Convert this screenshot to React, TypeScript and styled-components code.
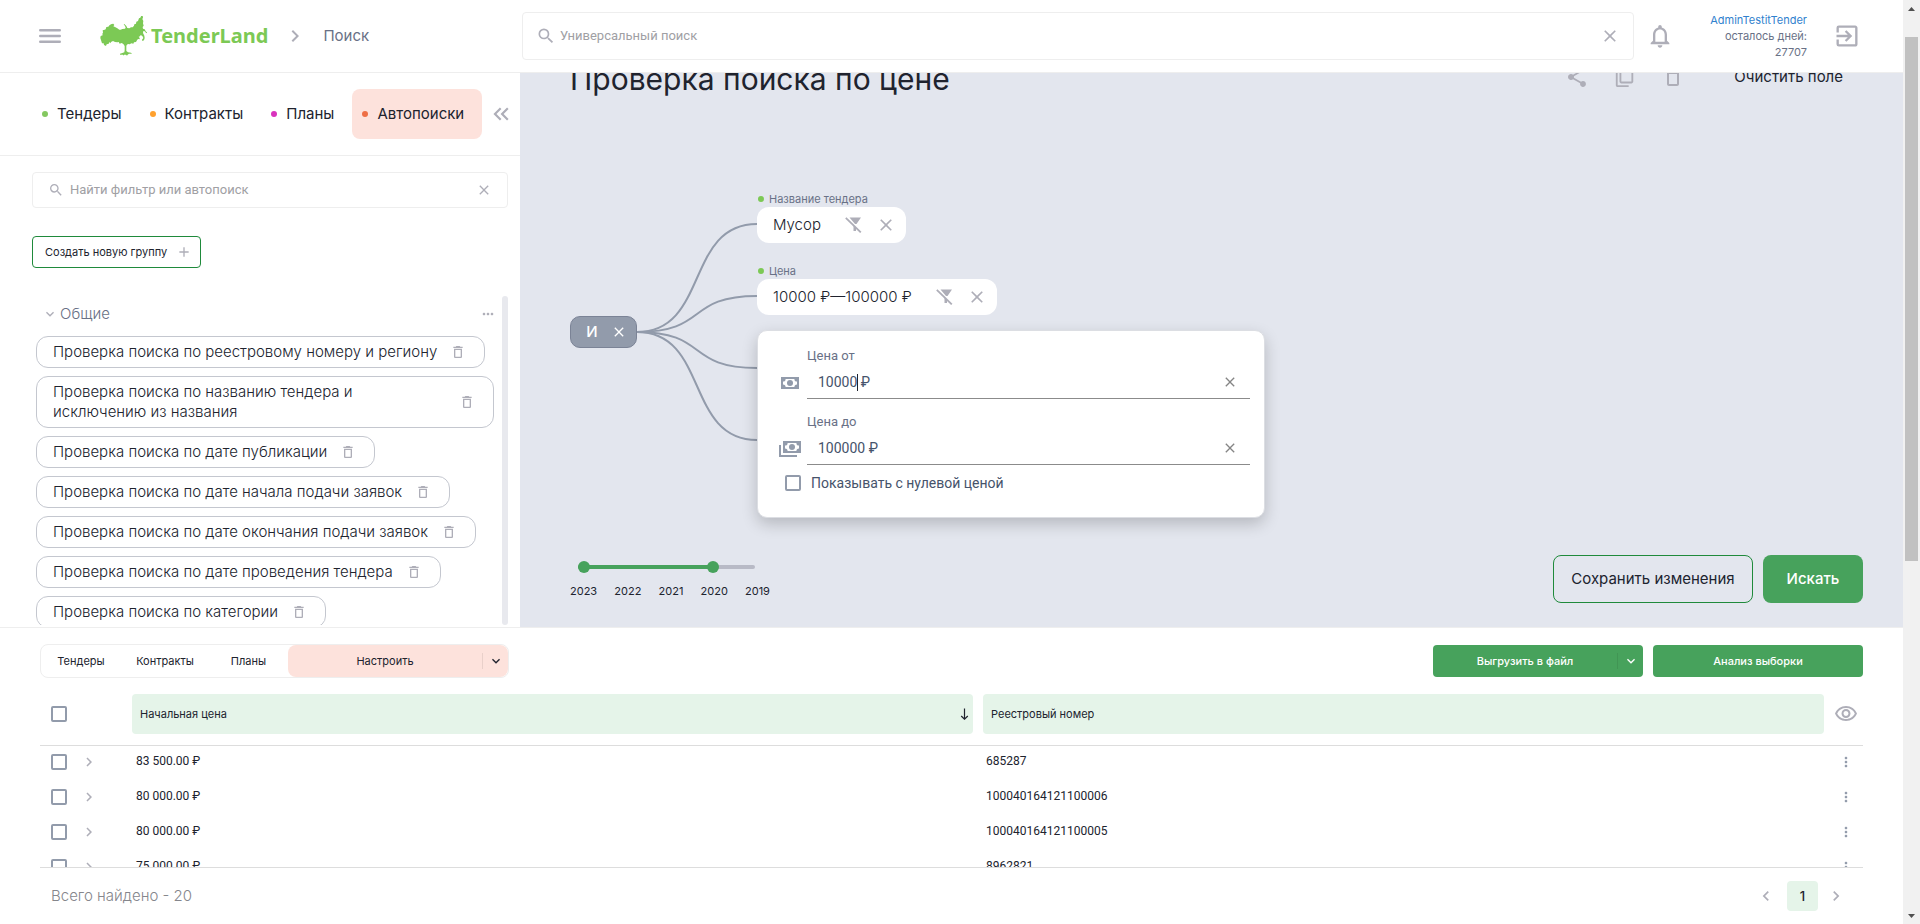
import React from "react";
import styled, { createGlobalStyle } from "styled-components";
import {
  MdAdd,
  MdChevronLeft,
  MdChevronRight,
  MdClose,
  MdDeleteOutline,
  MdExitToApp,
  MdExpandMore,
  MdKeyboardDoubleArrowLeft,
  MdMoreHoriz,
  MdMoreVert,
  MdNotificationsNone,
  MdOutlineVisibility,
  MdSearch,
  MdShare,
} from "react-icons/md";

const color = {
  ink: "#20232e",
  muted: "#697186",
  slate: "#46536b",
  icon: "#aeaeb8",
  steel: "#929bab",
  line: "#eeeeee",
  rule: "#dddddd",
  canvas: "#e3e6ee",
  green: "#47a25c",
  outline: "#1f8a3b",
  mint: "#e5f4e9",
  peach: "#fde2dc",
  brand: "#7cc955",
  link: "#3182ce",
};

const GlobalStyle = createGlobalStyle`
  *, *::before, *::after { box-sizing: border-box; }
  body {
    margin: 0;
    background: #fff;
    color: ${color.ink};
    font: 400 15px/20px Inter, "Liberation Sans", sans-serif;
  }
  button, input { font: inherit; color: inherit; margin: 0; }
  button { border: 0; padding: 0; background: none; cursor: pointer; }
  svg { display: block; flex: none; }
  h1, p { margin: 0; }
`;

/* ---------- page frame ---------- */

const Shell = styled.div`
  display: grid;
  grid-template-columns: minmax(0, 1fr) 17px;
  height: 100vh;
`;

const Page = styled.div`
  display: flex;
  flex-direction: column;
  min-width: 0;
  min-height: 0;
`;

const ScrollRail = styled.div`
  display: flex;
  flex-direction: column;
  align-items: center;
  background: #f1f1f1;
`;

const RailArrow = styled.svg`
  width: 17px;
  height: 17px;
  fill: #505050;
`;

const RailSpace = styled.div<{ $grow: number }>`
  flex: ${(p) => p.$grow} 1 0;
`;

const RailThumb = styled.div`
  flex: 524 1 0;
  width: 13px;
  background: #c1c1c1;
`;

const IconButton = styled.button<{ $tone?: string }>`
  display: flex;
  align-items: center;
  justify-content: center;
  flex: none;
  color: ${(p) => p.$tone ?? color.icon};
`;

/* ---------- header ---------- */

const Header = styled.header`
  position: relative;
  z-index: 2;
  flex: none;
  display: flex;
  align-items: center;
  height: 73px;
  padding-right: 42px;
  border-bottom: 1px solid ${color.line};
  background: #fff;
`;

const HeaderLeft = styled.div`
  flex: none;
  display: flex;
  align-items: center;
  width: 522px;
  padding-left: 39px;
`;

const Logo = styled.a`
  display: flex;
  align-items: center;
  gap: 4px;
  margin: 0 15px 0 39px;
  color: ${color.brand};
  font: 700 20px/28px "Noto Sans", sans-serif;
  text-decoration: none;
`;

const Crumb = styled.span`
  margin-left: 16px;
  color: ${color.muted};
`;

const SearchField = styled.label<{ $large?: boolean }>`
  display: flex;
  align-items: center;
  gap: ${(p) => (p.$large ? "4px" : "6px")};
  flex: ${(p) => (p.$large ? "1 1 0" : "none")};
  height: ${(p) => (p.$large ? "48px" : "36px")};
  padding: 0 ${(p) => (p.$large ? "13px" : "15px")} 0 ${(p) => (p.$large ? "13px" : "15px")};
  border: 1px solid ${color.line};
  border-radius: 4px;
  background: #fff;
  color: ${color.icon};
`;

const SearchInput = styled.input`
  flex: 1;
  min-width: 0;
  border: 0;
  outline: 0;
  padding: 0;
  background: none;
  font: 400 13px/16px Roboto, sans-serif;
  color: ${color.ink};
  &::placeholder { color: #a0a0a4; opacity: 1; }
`;

const BellButton = styled(IconButton)`
  margin-left: 12px;
`;

const Account = styled.div`
  width: 120px;
  margin: 0 26px 0 13px;
  color: ${color.muted};
  font-size: 11px;
  line-height: 16px;
  text-align: right;
  a { color: ${color.link}; text-decoration: none; }
`;

/* ---------- workspace ---------- */

const Workspace = styled.div`
  flex: 1 1 0;
  min-height: 0;
  display: grid;
  grid-template-columns: 520px minmax(0, 1fr);
  border-bottom: 1px solid ${color.line};
`;

const Sidebar = styled.aside`
  display: flex;
  flex-direction: column;
  min-height: 0;
  overflow: hidden;
`;

const TabRow = styled.nav`
  flex: none;
  display: flex;
  align-items: center;
  height: 83px;
  padding: 0 6px 0 32px;
  border-bottom: 1px solid ${color.line};
`;

const Tab = styled.button<{ $dot: string; $active?: boolean }>`
  display: flex;
  align-items: center;
  gap: 9px;
  height: 50px;
  padding: 0 18px 0 10px;
  border-radius: 8px;
  background: ${(p) => (p.$active ? color.peach : "none")};
  &::before {
    content: "";
    width: 6px;
    height: 6px;
    border-radius: 50%;
    background: ${(p) => p.$dot};
  }
`;

const CollapseButton = styled(IconButton)`
  margin-left: auto;
`;

const SidebarTools = styled.div`
  flex: none;
  display: flex;
  flex-direction: column;
  align-items: stretch;
  gap: 28px;
  padding: 16px 12px 28px 32px;
`;

const CreateGroup = styled.button`
  display: flex;
  align-items: center;
  align-self: flex-start;
  gap: 9px;
  height: 32px;
  padding: 0 8px 0 12px;
  border: 1px solid ${color.outline};
  border-radius: 4px;
  font-size: 11px;
  svg { color: ${color.icon}; }
`;

const GroupScroller = styled.div`
  flex: 1 1 0;
  min-height: 0;
  display: grid;
  grid-template-columns: minmax(0, 1fr) 6px;
  column-gap: 6px;
  margin: 0 12px 2px 36px;
  overflow: hidden;
`;

const GroupThumb = styled.div`
  border-radius: 3px;
  background: #e8e9ee;
`;

const GroupBody = styled.div`
  min-height: 0;
  overflow: hidden;
`;

const GroupHead = styled.div`
  display: flex;
  align-items: center;
  height: 36px;
  padding-left: 6px;
  color: ${color.muted};
  font-weight: 300;
  span { flex: 1; margin-left: 2px; }
`;

const ChipList = styled.ul`
  display: flex;
  flex-direction: column;
  align-items: flex-start;
  gap: 8px;
  margin: 4px 2px 0 0;
  padding: 0;
  list-style: none;
`;

const SavedChip = styled.li`
  flex: none;
  display: flex;
  align-items: center;
  gap: 13px;
  max-width: 100%;
  padding: 5px 18px 5px 16px;
  border: 1px solid #c4c7cf;
  border-radius: 12px;
  font-weight: 300;
`;

/* ---------- canvas ---------- */

const Canvas = styled.main`
  min-width: 0;
  min-height: 0;
  overflow: hidden;
  background: ${color.canvas};
`;

const CanvasBody = styled.div`
  display: flex;
  flex-direction: column;
  height: calc(100% + 24px);
  margin-top: -24px;
  padding-bottom: 24px;
`;

const TitleRow = styled.div`
  flex: none;
  display: flex;
  align-items: center;
  height: 56px;
  padding: 0 60px 0 50px;
`;

const Title = styled.h1`
  flex: 1;
  padding-top: 4px;
  font-size: 30px;
  font-weight: 400;
  line-height: 36px;
`;

const TitleTools = styled.div`
  display: flex;
  align-items: center;
  gap: 25px;
  margin-right: 49px;
`;

/* free canvas: the nodes stand at their own coordinates */
const Diagram = styled.div`
  position: relative;
  flex: 1;
`;

const Wires = styled.svg`
  position: absolute;
  left: 117px;
  top: 118px;
  fill: none;
  stroke: ${color.steel};
  stroke-width: 2;
`;

const RootNode = styled.button`
  position: absolute;
  left: 50px;
  top: 211px;
  display: flex;
  align-items: center;
  justify-content: center;
  gap: 13px;
  width: 67px;
  height: 32px;
  padding-left: 6px;
  border: 1px solid #7b8396;
  border-radius: 10px;
  background: ${color.steel};
  color: #fff;
  font-weight: 500;
`;

const FilterNode = styled.div<{ $top: number }>`
  position: absolute;
  left: 237px;
  top: ${(p) => p.$top}px;
`;

const NodeLabel = styled.div`
  display: flex;
  align-items: center;
  gap: 5px;
  height: 16px;
  padding-left: 1px;
  color: ${color.muted};
  font-size: 11px;
  line-height: 16px;
  &::before {
    content: "";
    width: 6px;
    height: 6px;
    border-radius: 50%;
    background: ${color.brand};
  }
`;

const NodeBody = styled.div`
  display: flex;
  align-items: center;
  width: max-content;
  height: 36px;
  padding: 0 10px 0 16px;
  border-radius: 12px;
  background: #fff;
  font-weight: 300;
  white-space: nowrap;
  button:nth-of-type(1) { margin: 0 14px 0 24px; }
`;

const Popup = styled.form`
  position: absolute;
  left: 237px;
  top: 225px;
  width: 508px;
  padding: 15px 14px 24px 21px;
  border: 1px solid #dcdee3;
  border-radius: 10px;
  background: #fff;
  box-shadow: 0 6px 16px rgba(0, 0, 0, 0.2);
  color: ${color.slate};
  font: 400 14px/20px Roboto, sans-serif;
`;

const PriceField = styled.div`
  display: grid;
  grid-template-columns: 22px minmax(0, 1fr);
  column-gap: 6px;
  align-items: center;
  justify-items: center;
  & + & { margin-top: 13px; }
  label {
    grid-column: 2;
    justify-self: start;
    color: ${color.muted};
    font-size: 13px;
  }
`;

const PriceLine = styled.div`
  position: relative;
  justify-self: stretch;
  display: flex;
  align-items: center;
  height: 33px;
  padding: 0 12px 0 11px;
  border-bottom: 1px solid #8b8b8b;
  input {
    flex: 1;
    min-width: 0;
    padding: 0;
    border: 0;
    outline: 0;
    background: none;
  }
`;

const Caret = styled.span`
  position: absolute;
  left: 50px;
  width: 1px;
  height: 17px;
  background: ${color.ink};
`;

const Tick = styled.input`
  appearance: none;
  display: block;
  flex: none;
  width: 16px;
  height: 16px;
  border: 2px solid ${color.steel};
  border-radius: 2px;
  background: #fff;
`;

const ZeroPrice = styled.label`
  display: flex;
  align-items: center;
  gap: 10px;
  margin-top: 8px;
  padding-left: 6px;
`;

const CanvasFooter = styled.div`
  flex: none;
  display: flex;
  align-items: flex-end;
  gap: 10px;
  padding: 0 40px 0 50px;
`;

const Years = styled.div`
  width: 200px;
  margin-right: auto;
`;

const Range = styled.div`
  position: relative;
  width: 177px;
  height: 12px;
  margin-left: 8px;
`;

const Track = styled.div<{ $filled?: boolean }>`
  position: absolute;
  inset: 4px ${(p) => (p.$filled ? "22%" : "0")} 4px 0;
  border-radius: 2px;
  background: ${(p) => (p.$filled ? color.green : "#b8bac6")};
`;

const RangeInput = styled.input`
  position: absolute;
  inset: 0;
  width: 100%;
  height: 12px;
  appearance: none;
  background: none;
  pointer-events: none;
  &::-webkit-slider-thumb {
    appearance: none;
    width: 12px;
    height: 12px;
    border-radius: 50%;
    background: ${color.green};
    pointer-events: auto;
  }
`;

const YearLabels = styled.div`
  display: flex;
  justify-content: space-between;
  padding: 10px 0 4px;
  font-size: 11px;
  line-height: 16px;
`;

const BigButton = styled.button<{ $solid?: boolean }>`
  width: ${(p) => (p.$solid ? "100px" : "200px")};
  height: 48px;
  border: ${(p) => (p.$solid ? "0" : `1px solid ${color.outline}`)};
  border-radius: 8px;
  background: ${(p) => (p.$solid ? color.green : "none")};
  color: ${(p) => (p.$solid ? "#fff" : color.ink)};
  font-weight: ${(p) => (p.$solid ? 500 : 400)};
`;

/* ---------- results ---------- */

const Results = styled.section`
  flex: none;
  padding: 16px 40px 0;
  font-size: 11px;
`;

const ResultBar = styled.div`
  display: flex;
  align-items: center;
  gap: 10px;
  margin-bottom: 16px;
`;

const Segments = styled.div`
  display: grid;
  grid-template-columns: 80px 88px 79px 220px;
  height: 34px;
  margin-right: auto;
  border: 1px solid ${color.line};
  border-radius: 8px;
`;

const SplitButton = styled.div<{ $kind: "peach" | "green" }>`
  display: flex;
  width: ${(p) => (p.$kind === "green" ? "210px" : "auto")};
  height: 32px;
  align-items: center;
  border-radius: ${(p) => (p.$kind === "green" ? "4px" : "8px")};
  background: ${(p) => (p.$kind === "green" ? color.green : color.peach)};
  color: ${(p) => (p.$kind === "green" ? "#fff" : color.ink)};
  font-weight: ${(p) => (p.$kind === "green" ? 500 : 400)};
  button:first-child { flex: 1; align-self: stretch; }
  button + button {
    display: flex;
    align-items: center;
    justify-content: center;
    width: 26px;
    height: 16px;
    border-left: 1px solid rgba(0, 0, 0, 0.08);
  }
`;

const GreenButton = styled.button`
  width: 210px;
  height: 32px;
  border-radius: 4px;
  background: ${color.green};
  color: #fff;
  font-weight: 500;
`;

const TableView = styled.div`
  height: 174px;
  overflow: hidden;
  border-bottom: 1px solid ${color.rule};
`;

const Table = styled.table`
  width: 100%;
  table-layout: fixed;
  border-collapse: separate;
  border-spacing: 0;
  th {
    padding: 0 0 11px;
    border-bottom: 1px solid ${color.rule};
    font-weight: 400;
    text-align: left;
  }
  th:nth-child(3) { padding-right: 5px; }
  th:nth-child(4) { padding-left: 5px; }
  td {
    height: 35px;
    padding: 0 0 3px;
    font: 400 12px/16px Roboto, sans-serif;
  }
  th:first-child, td:first-child { padding-left: 11px; }
  td:nth-child(3) { padding: 0 0 5px 4px; }
  td:nth-child(4) { padding: 0 0 5px 8px; }
`;

const HeadCell = styled.div`
  display: flex;
  align-items: center;
  justify-content: space-between;
  height: 40px;
  padding: 0 4px 0 8px;
  border-radius: 4px;
  background: ${color.mint};
`;

const EndCellButton = styled(IconButton)`
  width: 100%;
  padding-left: 5px;
`;

const ResultFooter = styled.footer`
  display: flex;
  align-items: center;
  height: 56px;
  padding: 0 17px 0 11px;
  p {
    flex: 1;
    color: #85868c;
    font-size: 15px;
    font-weight: 300;
  }
`;

const PageNumber = styled.button`
  width: 31px;
  height: 30px;
  margin: 0 8px 0 11px;
  border-radius: 4px;
  background: ${color.mint};
  font: 500 13px/20px Inter, sans-serif;
`;

/* ---------- drawings ---------- */

const MenuIcon = () => (
  <svg width="22" height="16" viewBox="0 0 22 16" stroke="currentColor" strokeWidth="2.4" strokeLinecap="round">
    <path d="M1.2 2.2h19.6M1.2 8h19.6M1.2 13.8h19.6" />
  </svg>
);

const TreeMark = () => (
  <svg width="47" height="40" viewBox="29 26 141 120" fill="currentColor">
    <path d="M30 92l1-6 6-2-1-5 2-3-1-7 6-2 3-1 2-7 6-1 4-5 6-3 5-1 3 4-3 4 5 2 7 4 6 4 4 0 5-2 8-1 2-3-2-5-4-5 2-1 6 6 3 6 6 1 5-3 5 0 4-5 1-4 5-2 1-6 5-2 3-8 4-2 3-6 4 0 1 6-2 4 3 6-1 7 2 7-3 4 1 5 5 2 4 7 4 1-3 4-5-6-4-1-1 6 4 8 1 7-2 7-5 2-1-4 4-5-3-6-5-3-2 4-4 1 3 4 0 4-5-1-3 4-3 5-6 1-2 4-6-1-5 3-5-1-4 3-1 4 0 14 5 4 9 1 3 3-9 0-4 3-2 3-3-3-6 0-2 3-1-3-9 0 0-3 7-2 6-2 1-6 0-13-4-6-5-3-6 2-3-5-4 1-7-1-6-3-6 3-1 4-3-4-3 5-6 2-2 5-6-3-1-5-5 0z" />
  </svg>
);

const CopyIcon = () => (
  <svg width="22" height="22" viewBox="0 0 24 24" fill="currentColor">
    <path d="M16 23H4c-1.100 0-2-.9-2-2V7h2v14h12v2zm3-4H8c-1.100 0-2-.9-2-2V3c0-1.100.9-2 2-2h11c1.100 0 2 .9 2 2v14c0 1.100-.9 2-2 2zm0-16H8v14h11V3z" />
  </svg>
);

const FilterOffIcon = () => (
  <svg width="17" height="16" viewBox="0 0 17 16" fill="currentColor">
    <path d="M4.500 .5H16L11.500 7H10zM7.200 6.500L11 10.400V14H8.500V9z" />
    <path d="M.8.8l15 14.600" stroke="currentColor" strokeWidth="1.8" />
  </svg>
);

const CashIcon = ({ stacked = false }: { stacked?: boolean }) => (
  <svg width={stacked ? 22 : 18} height={stacked ? 16 : 12} viewBox={stacked ? "-4 0 22 16" : "0 0 18 12"} fill={color.steel}>
    <path fillRule="evenodd" d="M0 0h18v12H0zM4.600 2A2.600 2.600 0 0 1 2 4.600v2.800A2.600 2.600 0 0 1 4.600 10h8.800A2.600 2.600 0 0 1 16 7.400V4.600A2.600 2.600 0 0 1 13.400 2z" />
    <circle cx="9" cy="6" r="3" />
    {stacked && <path d="M-4 4h2v10h16v2H-4z" />}
  </svg>
);

const SortIcon = () => (
  <svg width="9" height="12" viewBox="0 0 9 12" fill="none" stroke={color.ink} strokeWidth="1.2">
    <path d="M4.500 .5v10.500M1.200 8l3.300 3.200L7.800 8" />
  </svg>
);

/* ---------- data ---------- */

const tabs = [
  { name: "Тендеры", dot: "#84c860" },
  { name: "Контракты", dot: "#ffa12e" },
  { name: "Планы", dot: "#d932bd" },
  { name: "Автопоиски", dot: "#ee6e45", active: true },
];

const saved = [
  "Проверка поиска по реестровому номеру и региону",
  "Проверка поиска по названию тендера и исключению из названия",
  "Проверка поиска по дате публикации",
  "Проверка поиска по дате начала подачи заявок",
  "Проверка поиска по дате окончания подачи заявок",
  "Проверка поиска по дате проведения тендера",
  "Проверка поиска по категории",
];

const nodes = [
  { label: "Название тендера", value: "Мусор", top: 86 },
  { label: "Цена", value: "10000 ₽—100000 ₽", top: 158 },
];

const rows = [
  ["83 500.00 ₽", "685287"],
  ["80 000.00 ₽", "100040164121100006"],
  ["80 000.00 ₽", "100040164121100005"],
  ["75 000.00 ₽", "8962821"],
];

type PriceInputProps = {
  id: string;
  label: string;
  value: string;
  stacked?: boolean;
  caret?: boolean;
};

const PriceInput = ({ id, label, value, stacked, caret }: PriceInputProps) => (
  <PriceField>
    <label htmlFor={id}>{label}</label>
    <CashIcon stacked={stacked} />
    <PriceLine>
      <input id={id} defaultValue={value} />
      {caret && <Caret />}
      <IconButton type="button" $tone="#858585" aria-label="Очистить">
        <MdClose size={16} />
      </IconButton>
    </PriceLine>
  </PriceField>
);

export default function App() {
  return (
    <>
      <GlobalStyle />
      <Shell>
        <Page>
          <Header>
            <HeaderLeft>
              <IconButton aria-label="Меню"><MenuIcon /></IconButton>
              <Logo href="#"><TreeMark />TenderLand</Logo>
              <MdChevronRight size={24} color={color.icon} />
              <Crumb>Поиск</Crumb>
            </HeaderLeft>
            <SearchField $large>
              <MdSearch size={20} />
              <SearchInput placeholder="Универсальный поиск" aria-label="Универсальный поиск" />
              <IconButton aria-label="Очистить"><MdClose size={20} /></IconButton>
            </SearchField>
            <BellButton aria-label="Уведомления"><MdNotificationsNone size={28} /></BellButton>
            <Account>
              <a href="#">AdminTestitTender</a>
              <div>осталось дней:</div>
              <div>27707</div>
            </Account>
            <IconButton aria-label="Выход"><MdExitToApp size={28} /></IconButton>
          </Header>

          <Workspace>
            <Sidebar>
              <TabRow>
                {tabs.map((t) => (
                  <Tab key={t.name} $dot={t.dot} $active={t.active}>{t.name}</Tab>
                ))}
                <CollapseButton aria-label="Свернуть"><MdKeyboardDoubleArrowLeft size={26} /></CollapseButton>
              </TabRow>
              <SidebarTools>
                <SearchField>
                  <MdSearch size={16} />
                  <SearchInput placeholder="Найти фильтр или автопоиск" aria-label="Найти фильтр или автопоиск" />
                  <IconButton aria-label="Очистить"><MdClose size={16} /></IconButton>
                </SearchField>
                <CreateGroup>Создать новую группу<MdAdd size={16} /></CreateGroup>
              </SidebarTools>
              <GroupScroller>
                <GroupBody>
                  <GroupHead>
                    <MdExpandMore size={16} color={color.icon} />
                    <span>Общие</span>
                    <IconButton aria-label="Ещё"><MdMoreHoriz size={16} /></IconButton>
                  </GroupHead>
                  <ChipList>
                    {saved.map((s) => (
                      <SavedChip key={s}>
                        <span>{s}</span>
                        <IconButton aria-label="Удалить"><MdDeleteOutline size={16} /></IconButton>
                      </SavedChip>
                    ))}
                  </ChipList>
                </GroupBody>
                <GroupThumb />
              </GroupScroller>
            </Sidebar>

            <Canvas>
              <CanvasBody>
                <TitleRow>
                  <Title>Проверка поиска по цене</Title>
                  <TitleTools>
                    <IconButton aria-label="Поделиться"><MdShare size={24} /></IconButton>
                    <IconButton aria-label="Копировать"><CopyIcon /></IconButton>
                    <IconButton aria-label="Удалить"><MdDeleteOutline size={24} /></IconButton>
                  </TitleTools>
                  <button>Очистить поле</button>
                </TitleRow>
                <Diagram>
                  <Wires width="120" height="218" viewBox="0 0 120 218">
                    {[1, 73, 145, 217].map((y) => (
                      <path key={y} d={`M0 109C72 109 48 ${y} 120 ${y}`} />
                    ))}
                  </Wires>
                  <RootNode>И<MdClose size={16} /></RootNode>
                  {nodes.map((n) => (
                    <FilterNode key={n.label} $top={n.top}>
                      <NodeLabel>{n.label}</NodeLabel>
                      <NodeBody>
                        {n.value}
                        <IconButton aria-label="Исключить"><FilterOffIcon /></IconButton>
                        <IconButton aria-label="Убрать"><MdClose size={20} /></IconButton>
                      </NodeBody>
                    </FilterNode>
                  ))}
                  <Popup>
                    <PriceInput id="price-from" label="Цена от" value="10000 ₽" caret />
                    <PriceInput id="price-to" label="Цена до" value="100000 ₽" stacked />
                    <ZeroPrice><Tick type="checkbox" />Показывать с нулевой ценой</ZeroPrice>
                  </Popup>
                </Diagram>
                <CanvasFooter>
                  <Years>
                    <Range>
                      <Track />
                      <Track $filled />
                      <RangeInput type="range" min={0} max={100} defaultValue={0} aria-label="Год с" />
                      <RangeInput type="range" min={0} max={100} defaultValue={78} aria-label="Год по" />
                    </Range>
                    <YearLabels>
                      {[2023, 2022, 2021, 2020, 2019].map((y) => <span key={y}>{y}</span>)}
                    </YearLabels>
                  </Years>
                  <BigButton>Сохранить изменения</BigButton>
                  <BigButton $solid>Искать</BigButton>
                </CanvasFooter>
              </CanvasBody>
            </Canvas>
          </Workspace>

          <Results>
            <ResultBar>
              <Segments>
                <button>Тендеры</button>
                <button>Контракты</button>
                <button>Планы</button>
                <SplitButton $kind="peach">
                  <button>Настроить</button>
                  <button aria-label="Варианты"><MdExpandMore size={16} /></button>
                </SplitButton>
              </Segments>
              <SplitButton $kind="green">
                <button>Выгрузить в файл</button>
                <button aria-label="Форматы"><MdExpandMore size={16} /></button>
              </SplitButton>
              <GreenButton>Анализ выборки</GreenButton>
            </ResultBar>
            <TableView>
              <Table>
                <colgroup>
                  <col width="40" />
                  <col width="52" />
                  <col />
                  <col />
                  <col width="39" />
                </colgroup>
                <thead>
                  <tr>
                    <th><Tick type="checkbox" aria-label="Выбрать все" /></th>
                    <th />
                    <th><HeadCell>Начальная цена<SortIcon /></HeadCell></th>
                    <th><HeadCell>Реестровый номер</HeadCell></th>
                    <th><EndCellButton aria-label="Колонки"><MdOutlineVisibility size={24} /></EndCellButton></th>
                  </tr>
                </thead>
                <tbody>
                  {rows.map(([price, number]) => (
                    <tr key={number}>
                      <td><Tick type="checkbox" aria-label={number} /></td>
                      <td><IconButton aria-label="Раскрыть"><MdChevronRight size={18} /></IconButton></td>
                      <td>{price}</td>
                      <td>{number}</td>
                      <td><EndCellButton $tone={color.steel} aria-label="Действия"><MdMoreVert size={16} /></EndCellButton></td>
                    </tr>
                  ))}
                </tbody>
              </Table>
            </TableView>
            <ResultFooter>
              <p>Всего найдено - 20</p>
              <IconButton aria-label="Назад"><MdChevronLeft size={20} /></IconButton>
              <PageNumber>1</PageNumber>
              <IconButton aria-label="Вперёд"><MdChevronRight size={20} /></IconButton>
            </ResultFooter>
          </Results>
        </Page>
        <ScrollRail aria-hidden="true">
          <RailArrow viewBox="0 0 17 17"><path d="M5 11l3.500-4 3.500 4z" /></RailArrow>
          <RailSpace $grow={20} />
          <RailThumb />
          <RailSpace $grow={346} />
          <RailArrow viewBox="0 0 17 17"><path d="M5 7l3.500 4L12 7z" /></RailArrow>
        </ScrollRail>
      </Shell>
    </>
  );
}
